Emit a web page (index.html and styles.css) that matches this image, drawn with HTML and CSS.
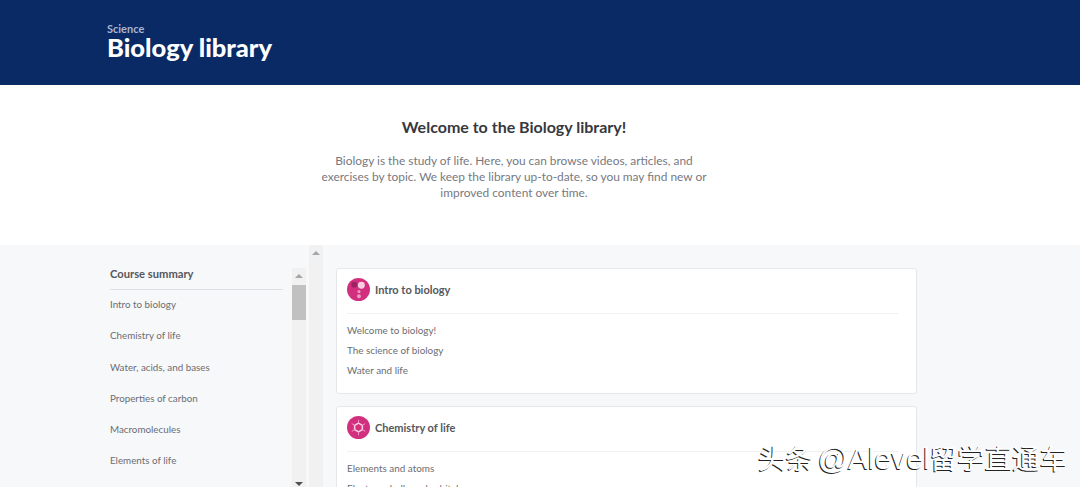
FILE: index.html
```html
<!DOCTYPE html>
<html lang="en">
<head>
    <meta charset="UTF-8">
    <meta name="viewport" content="width=device-width, initial-scale=1.0">
    <title>Biology library</title>
    <link rel="stylesheet" href="styles.css">
</head>
<body>
    <header class="topbar">
        <div class="crumb">Science</div>
        <h1>Biology library</h1>
    </header>

    <section class="welcome">
        <h2>Welcome to the Biology library!</h2>
        <p>Biology is the study of life. Here, you can browse videos, articles, and<br>exercises by topic. We keep the library up-to-date, so you may find new or<br>improved content over time.</p>
    </section>

    <main class="library">
        <nav class="summary">
            <h3>Course summary</h3>
            <a>Intro to biology</a>
            <a>Chemistry of life</a>
            <a>Water, acids, and bases</a>
            <a>Properties of carbon</a>
            <a>Macromolecules</a>
            <a>Elements of life</a>
        </nav>

        <div class="scrollbar inner">
            <span class="arrow up"></span>
            <span class="thumb"></span>
            <span class="arrow down"></span>
        </div>

        <div class="scrollbar outer">
            <span class="arrow up"></span>
        </div>

        <div class="cards">
            <div class="card">
                <div class="card-head">
                    <svg class="badge" viewBox="0 0 24 24">
                        <circle cx="12" cy="12" r="12" fill="#d2307f"/>
                        <circle cx="7.5" cy="7" r="3" fill="#9c2263"/>
                        <circle cx="15" cy="7.5" r="3.6" fill="#f6cfe2"/>
                        <circle cx="12.5" cy="14" r="1.6" fill="#ee9cc5"/>
                        <circle cx="12.5" cy="19" r="2" fill="#ee9cc5"/>
                    </svg>
                    <h4>Intro to biology</h4>
                </div>
                <a>Welcome to biology!</a>
                <a>The science of biology</a>
                <a>Water and life</a>
            </div>
            <div class="card">
                <div class="card-head">
                    <svg class="badge" viewBox="0 0 24 24">
                        <circle cx="12" cy="12" r="12" fill="#d2307f"/>
                        <path d="M12 7.5l4 2.25v4.5l-4 2.25-4-2.25v-4.5z" fill="none" stroke="#f6cfe2" stroke-width="1.6"/>
                        <path d="M12 7.5V4M16 9.75l3-1.75M16 14.25l3 1.75M12 16.5V20M8 14.25L5 16M8 9.75L5 8" stroke="#ee9cc5" stroke-width="1"/>
                    </svg>
                    <h4>Chemistry of life</h4>
                </div>
                <a>Elements and atoms</a>
                <a>Electron shells and orbitals</a>
            </div>
        </div>
    </main>

    <div class="watermark">头条 <span class="handle">@Alevel</span>留学直通车</div>
</body>
</html>
```

FILE: styles.css
```css
* {
    box-sizing: border-box;
}
html, body {
    height: 487px;
    overflow: hidden;
}
body {
    margin: 0;
    font-family: Lato, 'Noto Sans CJK SC', sans-serif;
    background: #fff;
    position: relative;
}
.topbar {
    height: 85px;
    padding: 22px 0 0 107px;
    background: #0a2a66;
    color: #fff;
}
.crumb {
    font-size: 11px;
    line-height: 13px;
    font-weight: 700;
    color: #a9b5cf;
}
h1 {
    margin: 0;
    font-size: 25.5px;
    line-height: 25px;
    font-weight: 900;
}
.welcome {
    height: 160px;
    padding: 32px 52px 0 0;
    text-align: center;
}
h2 {
    margin: 0 0 16px;
    font-size: 16px;
    line-height: 20px;
    font-weight: 700;
    color: #36383e;
}
.welcome p {
    margin: 0;
    font-size: 11.9px;
    line-height: 16px;
    color: #77797f;
}
.library {
    display: flex;
    height: 242px;
    padding-left: 110px;
    background: #f7f8fa;
    overflow: hidden;
}
.summary {
    width: 182px;
    padding-top: 21px;
}
h3 {
    width: 173px;
    margin: 0 0 -1px;
    padding-bottom: 8px;
    font-size: 11.2px;
    line-height: 15px;
    font-weight: 700;
    color: #55575d;
    border-bottom: 1px solid #dddfe3;
}
.summary a {
    display: block;
    font-size: 9.8px;
    line-height: 31.3px;
    color: #6b6d72;
}
.scrollbar {
    position: relative;
    width: 14px;
    background: #f1f1f1;
}
.scrollbar.inner {
    margin-top: 23px;
}
.scrollbar.outer {
    margin-left: 3px;
}
.thumb {
    display: block;
    margin-top: 17px;
    height: 35px;
    background: #c1c1c1;
}
.arrow {
    position: absolute;
    left: 3px;
    width: 0;
    height: 0;
    border-left: 4px solid transparent;
    border-right: 4px solid transparent;
}
.arrow.up {
    top: 6px;
    border-bottom: 4px solid #a6a6a6;
}
.arrow.down {
    bottom: 1px;
    border-top: 4px solid #505050;
}
.cards {
    width: 581px;
    margin-left: 13px;
    padding-top: 23px;
}
.card {
    height: 126px;
    margin-bottom: 12px;
    padding: 0 17px 0 10px;
    background: #fff;
    border: 1px solid #e6e7ea;
    border-radius: 3px;
}
.card-head {
    display: flex;
    align-items: center;
    gap: 5px;
    height: 45px;
    padding-bottom: 3px;
    margin-bottom: 6px;
    border-bottom: 1px solid #f0f1f3;
}
.badge {
    width: 23px;
    height: 23px;
}
h4 {
    margin: 0;
    font-size: 11px;
    font-weight: 700;
    color: #55575d;
}
.card a {
    display: block;
    font-size: 9.9px;
    line-height: 20px;
    color: #6b6d72;
}
.watermark {
    position: absolute;
    left: 758px;
    top: 442px;
    font-family: 'Liberation Sans', 'Noto Sans CJK SC', sans-serif;
    font-size: 27.5px;
    line-height: 34px;
    word-spacing: -3px;
    color: #fff;
    text-shadow: -1px 1px 0 #222;
    white-space: nowrap;
}
.handle {
    font-size: 30px;
}
```
